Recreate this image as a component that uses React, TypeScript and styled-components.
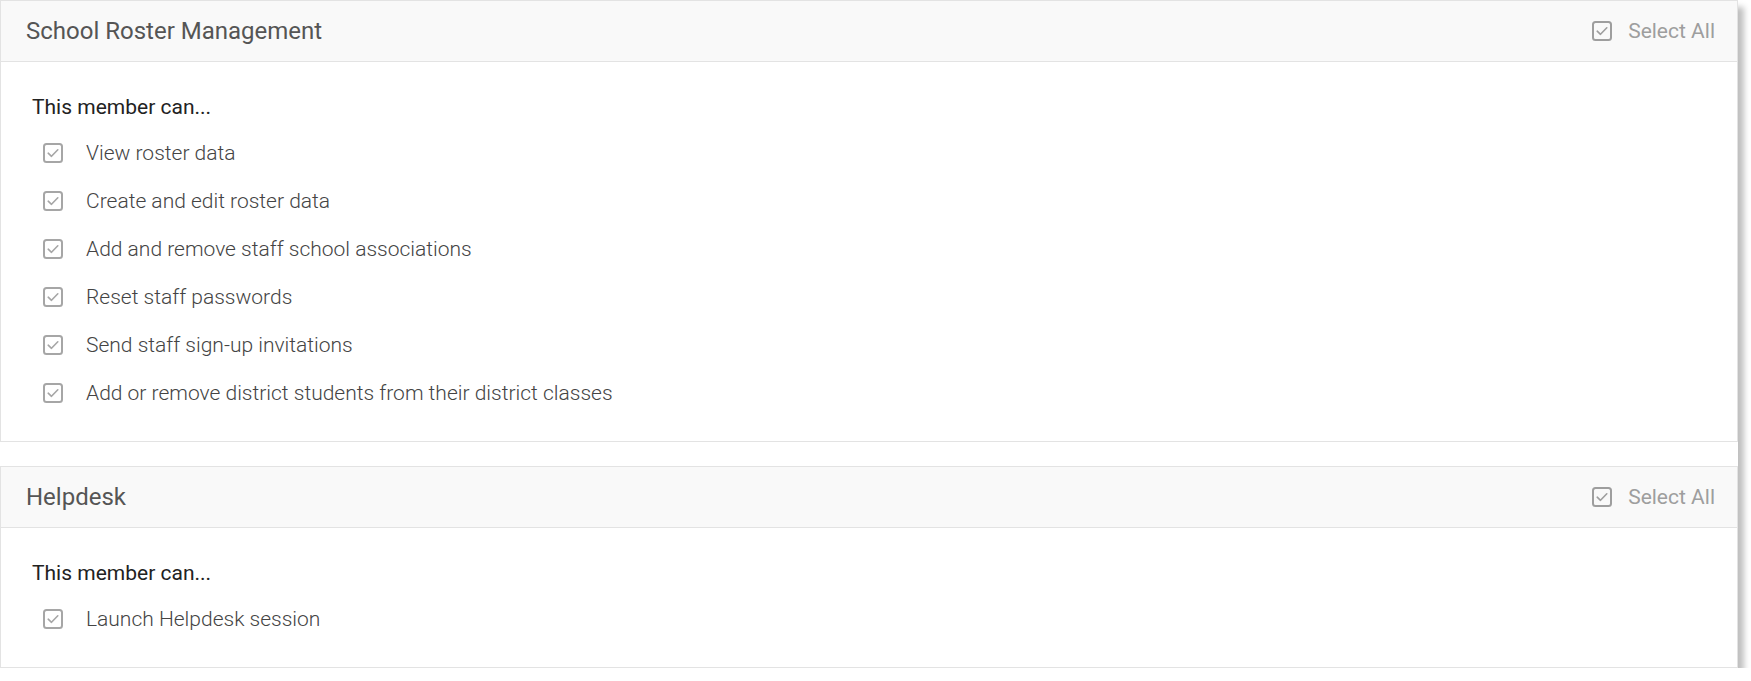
import React from "react";
import styled, { createGlobalStyle } from "styled-components";

const GlobalStyle = createGlobalStyle`
  html, body {
    margin: 0;
    padding: 0;
    background: #ffffff;
    font-family: Roboto, "Liberation Sans", Arial, sans-serif;
  }
`;

const Sheet = styled.div`
  width: 1738px;
  background: #ffffff;
  box-shadow: 6px 7px 6px rgba(0, 0, 0, 0.25);
  display: flex;
  flex-direction: column;
  gap: 24px;
`;

const Panel = styled.section`
  border: 1px solid #e3e3e3;
  background: #ffffff;
`;

const Header = styled.header`
  height: 61px;
  box-sizing: border-box;
  display: flex;
  align-items: center;
  justify-content: space-between;
  padding: 0 22px 0 25px;
  background: #f9f9f9;
  border-bottom: 1px solid #e3e3e3;
`;

const Title = styled.h2`
  margin: 0;
  font-size: 24px;
  font-weight: 400;
  color: #555555;
  line-height: 28px;
`;

const SelectAll = styled.label`
  display: flex;
  align-items: center;
  gap: 16px;
  font-size: 21px;
  font-weight: 400;
  color: #9e9e9e;
  line-height: 24px;
`;

const Body = styled.div`
  padding: 33px 31px 24px 31px;
  display: flex;
  flex-direction: column;
`;

const Intro = styled.p`
  margin: 0 0 10px 0;
  font-size: 21px;
  line-height: 24px;
  color: #222222;
  font-weight: 400;
`;

const List = styled.ul`
  list-style: none;
  margin: 0;
  padding: 0 0 0 11px;
`;

const Item = styled.li`
  height: 48px;
  display: flex;
  align-items: center;
  gap: 23px;
  font-size: 21px;
  font-weight: 300;
  color: #444444;
`;

const BoxSvg = styled.svg<{ $tone: string }>`
  flex: none;
  width: 20px;
  height: 20px;
  color: ${(p) => p.$tone};
`;

const CheckBox: React.FC<{ tone?: string }> = ({ tone = "#a6a6a6" }) => (
  <BoxSvg $tone={tone} viewBox="0 0 20 20" fill="none">
    <rect x="1" y="1" width="18" height="18" rx="2.5" stroke="currentColor" strokeWidth="2" />
    <polyline
      points="5.2,10.2 8.5,13.3 14.8,6.8"
      stroke="currentColor"
      strokeWidth="1.6"
      strokeLinecap="round"
      strokeLinejoin="round"
    />
  </BoxSvg>
);

type Section = { title: string; items: string[] };

const sections: Section[] = [
  {
    title: "School Roster Management",
    items: [
      "View roster data",
      "Create and edit roster data",
      "Add and remove staff school associations",
      "Reset staff passwords",
      "Send staff sign-up invitations",
      "Add or remove district students from their district classes",
    ],
  },
  {
    title: "Helpdesk",
    items: ["Launch Helpdesk session"],
  },
];

export default function App() {
  return (
    <>
      <GlobalStyle />
      <Sheet>
        {sections.map((s) => (
          <Panel key={s.title}>
            <Header>
              <Title>{s.title}</Title>
              <SelectAll>
                <CheckBox tone="#9e9e9e" />
                Select All
              </SelectAll>
            </Header>
            <Body>
              <Intro>This member can...</Intro>
              <List>
                {s.items.map((it) => (
                  <Item key={it}>
                    <CheckBox />
                    {it}
                  </Item>
                ))}
              </List>
            </Body>
          </Panel>
        ))}
      </Sheet>
    </>
  );
}
